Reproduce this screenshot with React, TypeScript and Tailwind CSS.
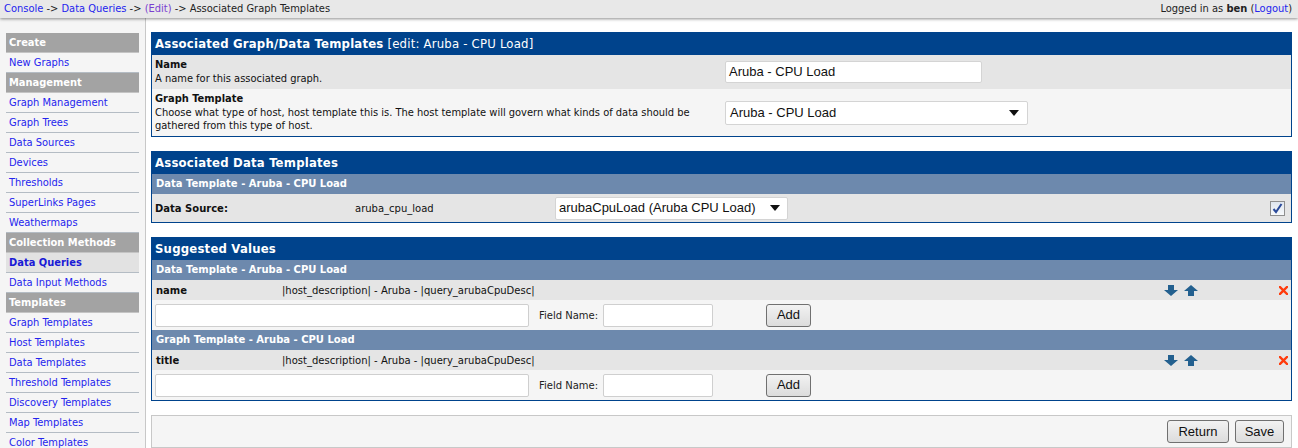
import React from "react";

const F = { fontFamily: '"DejaVu Sans", Verdana, sans-serif' } as const;
const C = { fontFamily: '"DejaVu Sans Condensed", "DejaVu Sans", Tahoma, sans-serif' } as const;
const A = { fontFamily: '"Liberation Sans", Arial, sans-serif' } as const;

function SideHeader({ label }: { label: string }) {
  return (
    <div className="h-[20px] bg-[#a3a3a3] text-white font-bold text-[11px] leading-[20px] pl-[3px] border-b border-[#c4c4c4]">
      {label}
    </div>
  );
}

function SideItem({ label, active }: { label: string; active?: boolean }) {
  return (
    <div
      className={
        "h-[20px] text-[11px] leading-[19px] pl-[3px] border-b border-[#b4bcc4] " +
        (active ? "bg-[#e2e2e2] font-bold text-[#1a1ad6]" : "text-[#2424ee]")
      }
    >
      {label}
    </div>
  );
}

function Arrow({ up }: { up?: boolean }) {
  return (
    <svg width="14" height="11" viewBox="0 0 14 11" className="block">
      {up ? (
        <path d="M7 0 L14 6 L10 6 L10 11 L4 11 L4 6 L0 6 Z" fill="#23608f" />
      ) : (
        <path d="M4 0 L10 0 L10 5 L14 5 L7 11 L0 5 L4 5 Z" fill="#23608f" />
      )}
    </svg>
  );
}

function RedX() {
  return (
    <svg width="9" height="9" viewBox="0 0 9 9" className="block">
      <path d="M1 1 L8 8 M8 1 L1 8" stroke="#ff3a0a" strokeWidth="2.4" strokeLinecap="square" />
    </svg>
  );
}

function SelectArrow() {
  return (
    <svg width="10" height="6" viewBox="0 0 10 6" className="block">
      <path d="M0 0 L10 0 L5 6 Z" fill="#111" />
    </svg>
  );
}

function Btn({ label, w }: { label: string; w: string }) {
  return (
    <div
      className={
        "h-[23px] rounded-[3px] border border-[#707070] bg-gradient-to-b from-[#f2f2f2] to-[#dcdcdc] text-[13px] text-[#111] flex items-center justify-center " +
        w
      }
      style={A}
    >
      {label}
    </div>
  );
}

function SuggestBlock({ title, field }: { title: string; field: string }) {
  return (
    <>
      <div className="h-[20px] bg-[#6d89ad] text-white font-bold text-[10px] leading-[20px] pl-[4px]">{title}</div>
      <div className="h-[20px] bg-[#e5e5e5] flex items-center text-[10px] text-[#111]">
        <div className="w-[130px] pl-[4px] font-bold">{field}</div>
        <div className="flex-1">|host_description| - Aruba - |query_arubaCpuDesc|</div>
        <div className="flex items-center gap-[6px] mr-[81px]">
          <Arrow />
          <Arrow up />
        </div>
        <div className="mr-[3px]">
          <RedX />
        </div>
      </div>
      <div className="h-[30px] bg-[#f5f5f5] flex items-center text-[10px] text-[#222]">
        <div className="ml-[3px] w-[374px] h-[23px] bg-white border border-[#cfcfcf] rounded-[2px]" />
        <div className="ml-[10px] w-[64px]">Field Name:</div>
        <div className="w-[110px] h-[23px] bg-white border border-[#cfcfcf] rounded-[2px]" />
        <div className="ml-[53px]">
          <Btn label="Add" w="w-[45px]" />
        </div>
      </div>
    </>
  );
}

export default function App() {
  const sidebar: Array<[string, "h" | "i" | "a"]> = [
    ["Create", "h"],
    ["New Graphs", "i"],
    ["Management", "h"],
    ["Graph Management", "i"],
    ["Graph Trees", "i"],
    ["Data Sources", "i"],
    ["Devices", "i"],
    ["Thresholds", "i"],
    ["SuperLinks Pages", "i"],
    ["Weathermaps", "i"],
    ["Collection Methods", "h"],
    ["Data Queries", "a"],
    ["Data Input Methods", "i"],
    ["Templates", "h"],
    ["Graph Templates", "i"],
    ["Host Templates", "i"],
    ["Data Templates", "i"],
    ["Threshold Templates", "i"],
    ["Discovery Templates", "i"],
    ["Map Templates", "i"],
    ["Color Templates", "i"],
  ];

  return (
    <div className="w-[1298px] h-[448px] overflow-hidden bg-white text-[#111]" style={F}>
      {/* top bar */}
      <div
        className="relative z-10 h-[18px] bg-[#e8e8e8] shadow-[0_1px_3px_rgba(0,0,0,0.45)] flex items-center justify-between pl-[4px] pr-[6px] text-[11px] text-[#222]"
        style={C}
      >
        <div>
          <span className="text-[#2424ee]">Console</span> -&gt; <span className="text-[#2424ee]">Data Queries</span> -&gt;{" "}
          <span className="text-[#7a3fd0]">(Edit)</span> -&gt; Associated Graph Templates
        </div>
        <div>
          Logged in as <b>ben</b> (<span className="text-[#2424ee]">Logout</span>)
        </div>
      </div>

      <div className="flex h-[430px]">
        {/* sidebar */}
        <div className="w-[146px] shrink-0 bg-[#f5f5f5] border-r border-[#c8c8c8] pl-[6px] pr-[6px] pt-[15px]" style={C}>
          {sidebar.map(([l, t]) =>
            t === "h" ? <SideHeader key={l} label={l} /> : <SideItem key={l} label={l} active={t === "a"} />
          )}
        </div>

        {/* main */}
        <div className="flex-1 pl-[5px] pr-[6px] pt-[14px] flex flex-col">
          {/* panel 1 */}
          <div className="border border-[#00438c]">
            <div className="h-[22px] bg-[#00438c] text-white text-[13px] leading-[22px] pl-[3px] tracking-[0.2px]" style={C}>
              <span className="font-bold">Associated Graph/Data Templates</span> [edit: Aruba - CPU Load]
            </div>
            <div className="h-[34px] bg-[#e5e5e5] flex items-center">
              <div className="w-[570px] pl-[3px] text-[11px] leading-[14px]" style={C}>
                <div className="font-bold">Name</div>
                <div>A name for this associated graph.</div>
              </div>
              <div className="pl-[3px]">
                <div
                  className="w-[257px] h-[22px] bg-white border border-[#d4d4d4] rounded-[2px] text-[13px] pl-[3px] leading-[20px]"
                  style={A}
                >
                  Aruba - CPU Load
                </div>
              </div>
            </div>
            <div className="h-[47px] bg-[#f5f5f5] flex items-center">
              <div className="w-[570px] pl-[3px] text-[11px] leading-[13.5px]" style={C}>
                <div className="font-bold">Graph Template</div>
                <div>
                  Choose what type of host, host template this is. The host template will govern what kinds of data should be
                  gathered from this type of host.
                </div>
              </div>
              <div className="pl-[3px]">
                <div
                  className="w-[303px] h-[24px] bg-white border border-[#d4d4d4] rounded-[2px] text-[13px] pl-[4px] pr-[8px] flex items-center justify-between"
                  style={A}
                >
                  <span>Aruba - CPU Load</span>
                  <SelectArrow />
                </div>
              </div>
            </div>
          </div>

          {/* panel 2 */}
          <div className="border border-[#00438c] mt-[14px]">
            <div className="h-[22px] bg-[#00438c] text-white text-[13px] font-bold leading-[22px] pl-[3px] tracking-[0.2px]" style={C}>
              Associated Data Templates
            </div>
            <div className="h-[20px] bg-[#6d89ad] text-white font-bold text-[10px] leading-[20px] pl-[4px]">
              Data Template - Aruba - CPU Load
            </div>
            <div className="h-[28px] bg-[#e5e5e5] flex items-center text-[10px]">
              <div className="w-[203px] pl-[3px] font-bold">Data Source:</div>
              <div className="w-[200px]">aruba_cpu_load</div>
              <div
                className="w-[233px] h-[23px] bg-white border border-[#d4d4d4] rounded-[2px] text-[13px] pl-[3px] pr-[7px] flex items-center justify-between"
                style={A}
              >
                <span>arubaCpuLoad (Aruba CPU Load)</span>
                <SelectArrow />
              </div>
              <div className="flex-1" />
              <div className="mr-[6px] w-[15px] h-[15px] border border-[#8f8f8f] bg-gradient-to-b from-[#dfe6ef] to-[#f7f9fb] flex items-center justify-center">
                <svg width="11" height="11" viewBox="0 0 11 11">
                  <path d="M1.5 6 L4 9 L9.5 1" stroke="#2a4a9a" strokeWidth="2" fill="none" />
                </svg>
              </div>
            </div>
          </div>

          {/* panel 3 */}
          <div className="border border-[#00438c] mt-[14px]">
            <div className="h-[22px] bg-[#00438c] text-white text-[13px] font-bold leading-[22px] pl-[3px] tracking-[0.2px]" style={C}>
              Suggested Values
            </div>
            <SuggestBlock title="Data Template - Aruba - CPU Load" field="name" />
            <SuggestBlock title="Graph Template - Aruba - CPU Load" field="title" />
          </div>

          {/* footer */}
          <div className="border border-[#c8c8c8] bg-[#f5f5f5] mt-[14px] h-[40px] flex items-start justify-end pt-[4px] pr-[7px] gap-[6px]">
            <Btn label="Return" w="w-[62px]" />
            <Btn label="Save" w="w-[49px]" />
          </div>
        </div>
      </div>
    </div>
  );
}
